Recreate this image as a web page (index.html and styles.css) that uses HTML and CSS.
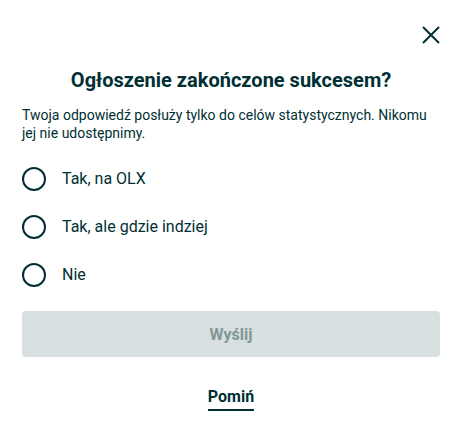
FILE: index.html
```html
<!DOCTYPE html>
<html lang="pl">
<head>
<meta charset="utf-8">
<link rel="stylesheet" href="styles.css">
</head>
<body>
<div class="modal">
  <div class="top">
    <button class="close" aria-label="Zamknij">
      <svg width="20" height="20" viewBox="0 0 20 20"><path d="M2 2 L18 18 M18 2 L2 18" stroke="#002f34" stroke-width="2" fill="none"/></svg>
    </button>
  </div>
  <h1 class="title">Ogłoszenie zakończone sukcesem?</h1>
  <p class="desc">Twoja odpowiedź posłuży tylko do celów statystycznych. Nikomu jej nie udostępnimy.</p>
  <div class="options">
    <label class="option"><span class="radio"></span><span>Tak, na OLX</span></label>
    <label class="option"><span class="radio"></span><span>Tak, ale gdzie indziej</span></label>
    <label class="option"><span class="radio"></span><span>Nie</span></label>
  </div>
  <button class="send">Wyślij</button>
  <div class="skip-row"><a class="skip">Pomiń</a></div>
</div>
</body>
</html>
```
FILE: styles.css
```css
html, body { margin: 0; padding: 0; background: #fff; }
body { font-family: Roboto, "Liberation Sans", sans-serif; color: #002f34; }
.modal { width: 462px; height: 442px; box-sizing: border-box; padding: 0 22px; background: #fff; border-radius: 4px; }
.top { display: flex; justify-content: flex-end; padding-top: 24px; height: 22px; }
.close { border: 0; background: none; padding: 0; margin-right: -2px; width: 22px; height: 22px; display: flex; align-items: center; justify-content: center; }
.title { margin: 22px 0 0; text-align: center; font-size: 20px; font-weight: 700; line-height: 24px; }
.desc { margin: 14px 0 0; font-size: 14px; line-height: 18px; color: #002f34; }
.options { display: flex; flex-direction: column; gap: 24px; margin-top: 25px; }
.option { display: flex; align-items: center; gap: 16px; font-size: 16px; line-height: 24px; height: 24px; }
.radio { width: 24px; height: 24px; box-sizing: border-box; border: 2px solid #002f34; border-radius: 50%; flex: none; }
.send { display: block; width: 100%; height: 46px; margin-top: 24px; border: 0; border-radius: 4px; background: #d8dfe0; color: #7f9799; font-family: inherit; font-size: 16px; font-weight: 700; }
.skip-row { display: flex; justify-content: center; margin-top: 30px; }
.skip { font-size: 16px; font-weight: 700; line-height: 20px; padding-bottom: 2px; border-bottom: 2px solid #002f34; }
```
